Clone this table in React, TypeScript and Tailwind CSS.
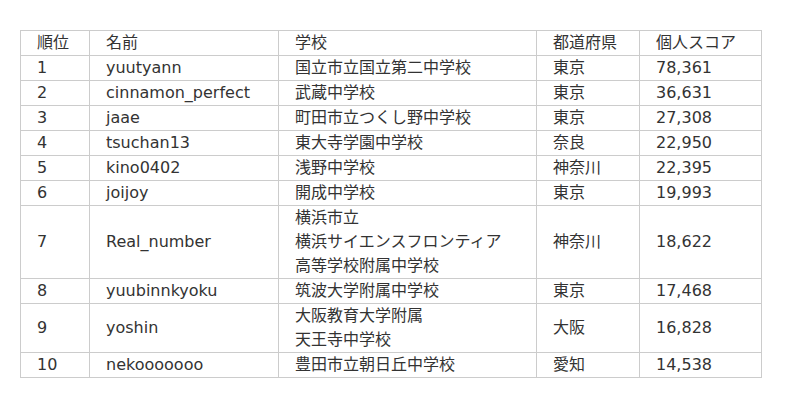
const rows: [string, string, string[], string, string][] = [
  ['1', 'yuutyann', ['国立市立国立第二中学校'], '東京', '78,361'],
  ['2', 'cinnamon_perfect', ['武蔵中学校'], '東京', '36,631'],
  ['3', 'jaae', ['町田市立つくし野中学校'], '東京', '27,308'],
  ['4', 'tsuchan13', ['東大寺学園中学校'], '奈良', '22,950'],
  ['5', 'kino0402', ['浅野中学校'], '神奈川', '22,395'],
  ['6', 'joijoy', ['開成中学校'], '東京', '19,993'],
  ['7', 'Real_number', ['横浜市立', '横浜サイエンスフロンティア', '高等学校附属中学校'], '神奈川', '18,622'],
  ['8', 'yuubinnkyoku', ['筑波大学附属中学校'], '東京', '17,468'],
  ['9', 'yoshin', ['大阪教育大学附属', '天王寺中学校'], '大阪', '16,828'],
  ['10', 'nekooooooo', ['豊田市立朝日丘中学校'], '愛知', '14,538'],
];

const cell = 'border border-[#cccccc] pl-4 pr-2 align-middle font-normal text-left';

export default function App() {
  return (
    <div
      className="w-[800px] h-[408px] bg-white pt-[30px] pl-5 text-[16px] leading-6 text-[#333333]"
      style={{ fontFamily: '"DejaVu Sans", "Noto Sans CJK JP", sans-serif' }}
    >
      <table className="border-collapse table-fixed w-[741px]">
        <colgroup>
          <col className="w-[69px]" />
          <col className="w-[189px]" />
          <col className="w-[258px]" />
          <col className="w-[103px]" />
          <col className="w-[122px]" />
        </colgroup>
        <thead>
          <tr>
            <th className={cell}>順位</th>
            <th className={cell}>名前</th>
            <th className={cell}>学校</th>
            <th className={cell}>都道府県</th>
            <th className={cell}>個人スコア</th>
          </tr>
        </thead>
        <tbody>
          {rows.map((r) => (
            <tr key={r[0]}>
              <td className={cell}>{r[0]}</td>
              <td className={cell}>{r[1]}</td>
              <td className={cell}>
                {r[2].map((line, i) => (
                  <div key={i}>{line}</div>
                ))}
              </td>
              <td className={cell}>{r[3]}</td>
              <td className={cell}>{r[4]}</td>
            </tr>
          ))}
        </tbody>
      </table>
    </div>
  );
}
